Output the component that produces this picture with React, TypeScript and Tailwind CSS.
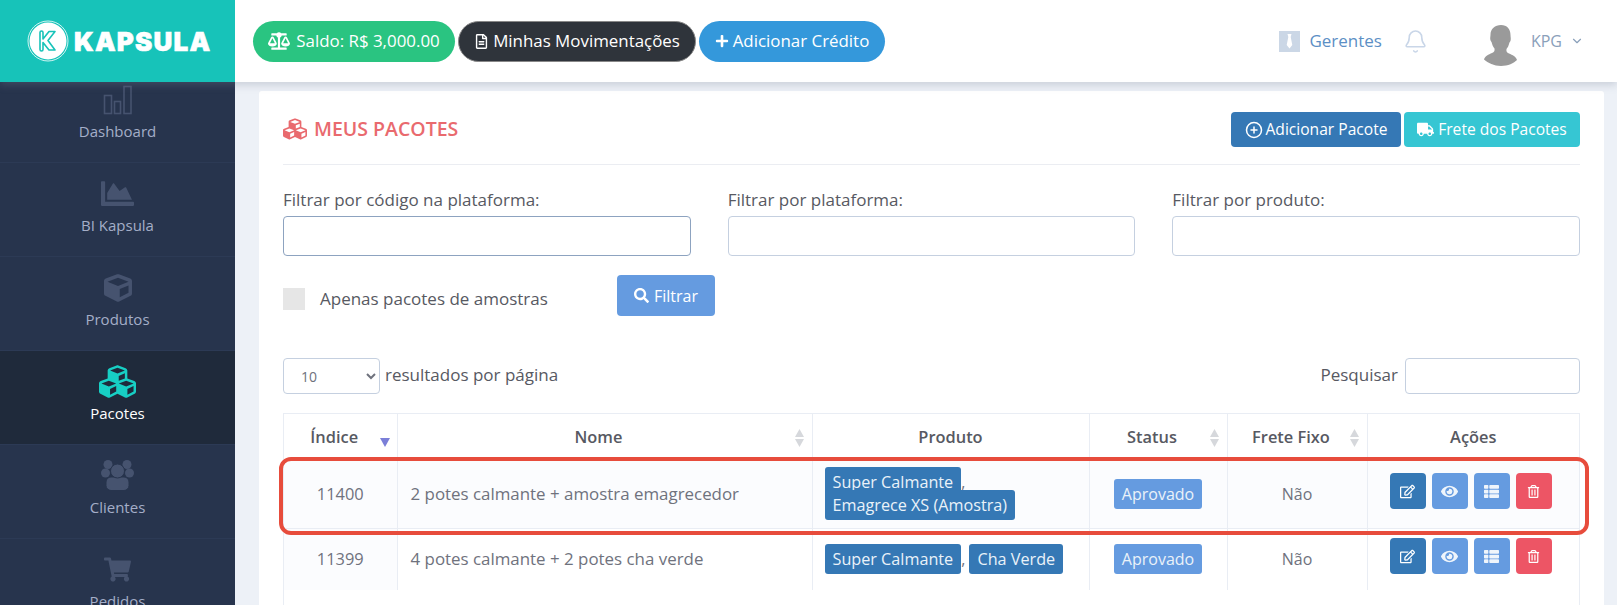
import React from 'react';
import {
  FaBalanceScale,
  FaRegFileAlt,
  FaPlus,
  FaTruck,
  FaSearch,
  FaRegEdit,
  FaEye,
  FaThList,
  FaRegTrashAlt,
  FaChartArea,
  FaCube,
  FaCubes,
  FaShoppingCart,
} from 'react-icons/fa';
import {Bell, ChevronDown, CirclePlus} from 'lucide-react';

const BarsIcon = () => (
  <svg width="30" height="30" viewBox="0 0 30 30" fill="none" stroke="currentColor" strokeWidth="1.6">
    <rect x="1.5" y="10.5" width="7" height="18" />
    <rect x="11.5" y="16.5" width="6" height="12" />
    <rect x="21" y="1.5" width="7" height="27" />
  </svg>
);

const UsersIcon = () => (
  <svg width="33" height="31" viewBox="0 0 33 31" fill="currentColor">
    <circle cx="7" cy="4.500" r="4.500" />
    <circle cx="26" cy="4.500" r="4.500" />
    <circle cx="4.500" cy="13" r="4.500" />
    <circle cx="28.500" cy="13" r="4.500" />
    <rect x="5" y="17" width="23" height="13.500" rx="5" stroke="#27344d" strokeWidth="1" />
    <circle cx="16.500" cy="11" r="7" stroke="#27344d" strokeWidth="1" />
  </svg>
);

const Logo = () => (
  <svg width="42" height="42" viewBox="0 0 42 42">
    <circle cx="21" cy="21" r="20" fill="none" stroke="#fff" strokeWidth="0.8" />
    <circle cx="21" cy="21" r="18.5" fill="#fff" />
    <path
      d="M13 12.500a1.500 1.500 0 0 1 3 0v6.500l6-7.500h6l-7 9 7 9.500h-6l-6-7.500v7a1.500 1.500 0 0 1-3 0z"
      fill="none"
      stroke="#17c3b9"
      strokeWidth="1.6"
      strokeLinejoin="round"
    />
  </svg>
);

const TieIcon = () => (
  <svg width="21" height="21" viewBox="0 0 21 21">
    <rect width="21" height="21" fill="#cbd7e6" />
    <path d="M8.500 3h4l-.8 3 1.600 8-2.800 3.500-2.800-3.500 1.600-8z" fill="#fff" />
  </svg>
);

const Avatar = () => (
  <svg width="34" height="41" viewBox="0 0 34 41">
    <path
      d="M17 0c6 0 9.500 4 9.500 10 0 2 .5 3 .2 5-.3 1.500-1 2-1.400 3-.6 2.500-1.500 4.500-2.800 6-.4 2 .2 3.500 2.500 4.500 3.500 1.500 7 3 8 6.500C30 38 24 41 17 41S4 38 0 34.500c1-3.500 4.500-5 8-6.500 2.300-1 2.900-2.500 2.500-4.500-1.300-1.500-2.200-3.500-2.800-6-.4-1-1.100-1.500-1.400-3-.3-2 .2-3 .2-5C6.500 4 11 0 17 0z"
      fill="#9a9a9a"
    />
  </svg>
);

const SortArrows = () => (
  <span className="absolute right-[8px] top-[15px] flex flex-col gap-[2px] text-[#d6d8dc]">
    <svg width="9" height="8" viewBox="0 0 9 8" fill="currentColor">
      <path d="M4.500 0 9 8H0z" />
    </svg>
    <svg width="9" height="8" viewBox="0 0 9 8" fill="currentColor">
      <path d="M4.500 8 0 0h9z" />
    </svg>
  </span>
);

const SortActive = () => (
  <span className="absolute right-[7px] top-[24px] text-[#7b7fd8]">
    <svg width="10" height="9" viewBox="0 0 10 9" fill="currentColor">
      <path d="M5 9 0 0h10z" />
    </svg>
  </span>
);

const menu = [
  {label: 'Dashboard', icon: <BarsIcon />},
  {label: 'BI Kapsula', icon: <FaChartArea size={33} />},
  {label: 'Produtos', icon: <FaCube size={28} />},
  {label: 'Pacotes', icon: <FaCubes size={37} />, active: true},
  {label: 'Clientes', icon: <UsersIcon />},
  {label: 'Pedidos', icon: <FaShoppingCart size={27} />},
];

const filters = [
  {label: 'Filtrar por código na plataforma:', focused: true},
  {label: 'Filtrar por plataforma:'},
  {label: 'Filtrar por produto:'},
];

const ProductBadge = ({children}: {children: React.ReactNode}) => (
  <span className="rounded-[3px] bg-[#3578b5] px-2 py-1 text-[16.2px] text-[#eaf2f9]">{children}</span>
);

const ActionButtons = () => (
  <div className="flex gap-[6px] pb-[6px] pl-[22px] text-white">
    <button className="flex h-9 w-9 items-center justify-center rounded-[4px] bg-[#3578b5]">
      <FaRegEdit size={15} />
    </button>
    <button className="flex h-9 w-9 items-center justify-center rounded-[4px] bg-[#659be0]">
      <FaEye size={17} className="opacity-90" />
    </button>
    <button className="flex h-9 w-9 items-center justify-center rounded-[4px] bg-[#659be0]">
      <FaThList size={15} className="opacity-90" />
    </button>
    <button className="flex h-9 w-9 items-center justify-center rounded-[4px] bg-[#ed5565]">
      <FaRegTrashAlt size={13} />
    </button>
  </div>
);

const App = () => {
  return (
    <div className="flex h-[605px] w-[1617px] flex-col overflow-hidden bg-[#edf1f7] font-['Open_Sans',sans-serif] text-[16px] text-[#575962]">
      <header className="relative z-10 flex h-[82px] shrink-0 bg-white shadow-[0_3px_8px_rgba(120,130,150,0.3)]">
        <div className="flex w-[235px] shrink-0 items-center gap-[5px] bg-[#17c3b9] pl-[27px]">
          <Logo />
          <span className="font-['Inter',sans-serif] text-[26px] font-black tracking-[1.2px] text-white [-webkit-text-stroke:0.6px_#fff]">
            KAPSULA
          </span>
        </div>
        <div className="flex items-center gap-[3px] pl-[18px] text-[16.9px]">
          <span className="flex h-[41px] w-[202px] items-center justify-center gap-[6px] rounded-full bg-[#2ac481] text-white">
            <FaBalanceScale size={22} />
            Saldo: R$ 3,000.00
          </span>
          <span className="flex h-[41px] w-[238px] items-center justify-center gap-1 rounded-full border border-[#888] bg-[#2f343b] text-white">
            <FaRegFileAlt size={15} />
            Minhas Movimentações
          </span>
          <span className="flex h-[41px] w-[186px] items-center justify-center gap-1 rounded-full bg-[#3498db] text-white">
            <FaPlus size={14} />
            Adicionar Crédito
          </span>
        </div>
        <div className="ml-auto flex items-center pr-[33px]">
          <TieIcon />
          <span className="ml-[9px] text-[17px] text-[#5c8fc5]">Gerentes</span>
          <Bell size={25} strokeWidth={1.5} className="ml-[21px] text-[#c9d6e8]" />
          <span className="ml-[56px] mt-[8px]">
            <Avatar />
          </span>
          <span className="ml-[13px] text-[#8aa0ba]">KPG</span>
          <ChevronDown size={14} className="ml-[8px] text-[#8aa0ba]" />
        </div>
      </header>

      <div className="flex min-h-0 flex-1">
        <nav className="w-[235px] shrink-0 overflow-hidden bg-[#27344d]">
          <ul className="-mt-[13px]">
            {menu.map((item) => (
              <li
                key={item.label}
                className={
                  item.active
                    ? 'flex h-[94px] flex-col items-center justify-center gap-[3px] border-b border-[#2c3a55] bg-[#1f2a3b] pb-[6px] text-[15px] text-white'
                    : 'flex h-[94px] flex-col items-center justify-center gap-[3px] border-b border-[#2c3a55] pb-[6px] text-[15px] text-[#a4aec8]'
                }
              >
                <span className={item.active ? 'flex h-[34px] items-center text-[#17cfc4]' : 'flex h-[34px] items-center text-[#46536f]'}>
                  {item.icon}
                </span>
                {item.label}
              </li>
            ))}
          </ul>
        </nav>

        <main className="min-w-0 flex-1 pl-[24px] pr-[13px] pt-[9px]">
          <section className="flex h-full flex-col rounded-t-[3px] bg-white px-[24px] pt-[21px]">
            <div className="flex h-[35px] items-center justify-between">
              <h1 className="flex items-center gap-[7px] pb-[2px] text-[19.5px] font-semibold text-[#e96a6e]">
                <FaCubes size={24} />
                MEUS PACOTES
              </h1>
              <div className="flex gap-[3px] text-[15.6px] text-white">
                <button className="flex h-[35px] w-[170px] items-center justify-center gap-[3px] rounded-[4px] bg-[#3578b5]">
                  <CirclePlus size={18} />
                  Adicionar Pacote
                </button>
                <button className="flex h-[35px] w-[176px] items-center justify-center gap-[4px] rounded-[4px] bg-[#36c6d3]">
                  <FaTruck size={17} />
                  Frete dos Pacotes
                </button>
              </div>
            </div>
            <hr className="mt-[17px] border-[#ebedf2]" />

            <div className="mt-[23px] grid grid-cols-3 gap-[37px]">
              {filters.map((filter) => (
                <div key={filter.label}>
                  <label className="block h-[23px] text-[17px] leading-[24px]">{filter.label}</label>
                  <input
                    className={
                      filter.focused
                        ? 'mt-[5px] block h-[40px] w-full rounded-[4px] border border-[#8da3c0] bg-white'
                        : 'mt-[5px] block h-[40px] w-full rounded-[4px] border border-[#c5d0e0] bg-white'
                    }
                  />
                </div>
              ))}
            </div>

            <div className="mt-[19px] flex h-[41px]">
              <span className="mt-[13px] h-[22px] w-[22px] bg-[#e6e6e6]" />
              <span className="ml-[15px] mt-[12px] w-[297px] text-[17px] leading-[24px]">Apenas pacotes de amostras</span>
              <button className="flex h-[41px] w-[98px] items-center justify-center gap-[5px] rounded-[4px] bg-[#659be0] text-white">
                <FaSearch size={15} />
                Filtrar
              </button>
            </div>

            <div className="mt-[42px] flex h-[36px] items-center justify-between text-[17px]">
              <div className="flex items-center gap-[5px]">
                <select defaultValue="10" className="h-[36px] w-[97px] rounded-[4px] border border-[#c5d0e0] pl-[13px] text-[14px] text-[#6f727d]">
                  <option value="10">10</option>
                  <option value="25">25</option>
                </select>
                <span className="pb-[2px]">resultados por página</span>
              </div>
              <div className="flex items-center gap-[7px]">
                <span className="pb-[2px]">Pesquisar</span>
                <input className="h-[36px] w-[175px] rounded-[4px] border border-[#c5d0e0] bg-white" />
              </div>
            </div>

            <div className="relative mt-[19px] flex-1 border-x border-t border-[#e9edf4]">
              <table className="w-full table-fixed border-collapse text-[#6f727d]">
                <colgroup>
                  <col className="w-[113px]" />
                  <col className="w-[415px]" />
                  <col className="w-[277px]" />
                  <col className="w-[138px]" />
                  <col className="w-[140px]" />
                  <col />
                </colgroup>
                <thead>
                  <tr className="h-[47px] text-[16.4px] text-[#575962]">
                    <th className="relative pl-[18px] pr-[30px] font-semibold">
                      Índice
                      <SortActive />
                    </th>
                    <th className="relative border-l border-[#e9edf4] pl-[18px] pr-[30px] font-semibold">
                      Nome
                      <SortArrows />
                    </th>
                    <th className="border-l border-[#e9edf4] font-semibold">Produto</th>
                    <th className="relative border-l border-[#e9edf4] pl-[18px] pr-[30px] font-semibold">
                      Status
                      <SortArrows />
                    </th>
                    <th className="relative border-l border-[#e9edf4] pl-[18px] pr-[30px] font-semibold">
                      Frete Fixo
                      <SortArrows />
                    </th>
                    <th className="border-l border-[#e9edf4] font-semibold">Ações</th>
                  </tr>
                </thead>
                <tbody>
                  <tr className="h-[67px] border-b border-[#e9edf4] bg-[#fbfcfe]">
                    <td className="text-center text-[16.4px]">11400</td>
                    <td className="border-l border-[#e9edf4] px-[13px] pb-[2px] text-[16.9px]">2 potes calmante + amostra emagrecedor</td>
                    <td className="border-l border-[#e9edf4] px-[12px] leading-[23px]">
                      <ProductBadge>Super Calmante</ProductBadge>,
                      <br />
                      <ProductBadge>Emagrece XS (Amostra)</ProductBadge>
                    </td>
                    <td className="border-l border-[#e9edf4] text-center">
                      <span className="inline-block h-[30px] w-[88px] rounded-[3px] bg-[#659be0] leading-[30px] text-[#eaf2f9]">Aprovado</span>
                    </td>
                    <td className="border-l border-[#e9edf4] text-center">Não</td>
                    <td className="border-l border-[#e9edf4]">
                      <ActionButtons />
                    </td>
                  </tr>
                  <tr className="h-[62px]">
                    <td className="bg-[#fbfcfe] text-center text-[16.4px]">11399</td>
                    <td className="border-l border-[#e9edf4] px-[13px] pb-[2px] text-[16.9px]">4 potes calmante + 2 potes cha verde</td>
                    <td className="border-l border-[#e9edf4] px-[12px] leading-[23px]">
                      <ProductBadge>Super Calmante</ProductBadge>, <ProductBadge>Cha Verde</ProductBadge>
                    </td>
                    <td className="border-l border-[#e9edf4] text-center">
                      <span className="inline-block h-[30px] w-[88px] rounded-[3px] bg-[#659be0] leading-[30px] text-[#eaf2f9]">Aprovado</span>
                    </td>
                    <td className="border-l border-[#e9edf4] text-center">Não</td>
                    <td className="border-l border-[#e9edf4]">
                      <ActionButtons />
                    </td>
                  </tr>
                </tbody>
              </table>
              {/* red highlight drawn over the first row */}
              <div className="pointer-events-none absolute -left-[5px] top-[43px] h-[78px] w-[1310px] rounded-[12px] border-4 border-[#e74c3c]" />
            </div>
          </section>
        </main>
      </div>
    </div>
  );
};

export default App;
